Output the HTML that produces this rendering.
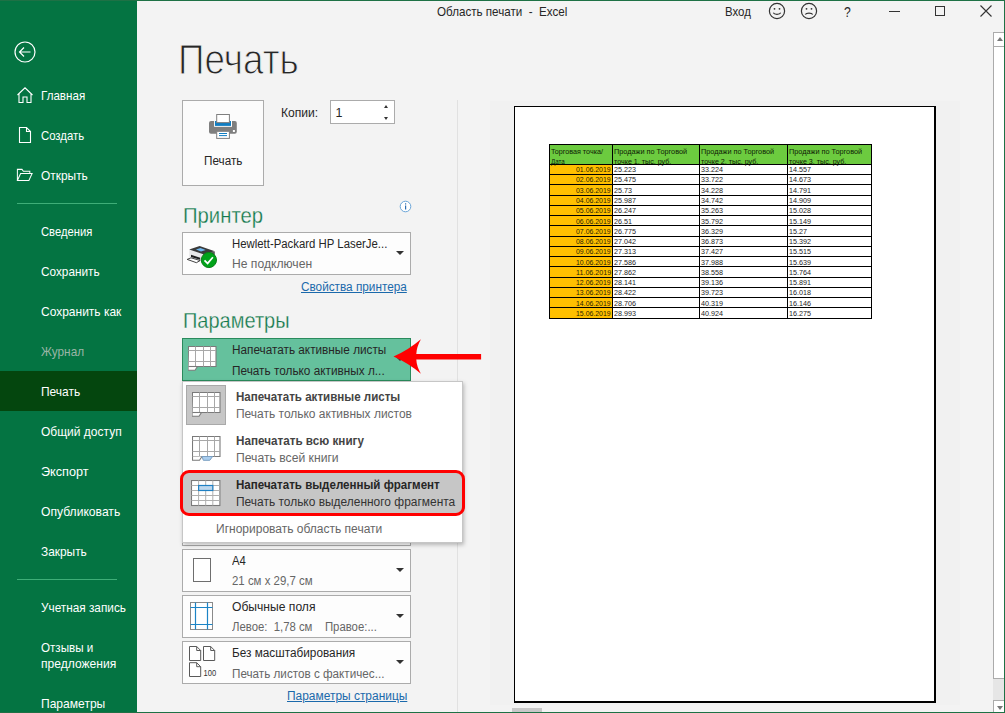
<!DOCTYPE html>
<html lang="ru">
<head>
<meta charset="utf-8">
<title>Область печати - Excel</title>
<style>
*{box-sizing:border-box;margin:0;padding:0}
html,body{width:1005px;height:713px;overflow:hidden;background:#f3f3f3}
body{position:relative;font-family:"Liberation Sans",sans-serif;font-size:13px;color:#262626}
.a{position:absolute}
.t{position:absolute;white-space:nowrap;line-height:1;transform-origin:0 50%;display:block}
#win{position:absolute;left:0;top:0;width:1005px;height:713px;background:#f3f3f3;overflow:hidden}
#side{position:absolute;left:0;top:0;width:137px;height:713px;background:#047442}
#sel{position:absolute;left:0;top:371px;width:137px;height:40px;background:#04460e}
.hr{position:absolute;left:17px;width:100px;height:1px;background:#3fae78}
.box{position:absolute;left:182px;width:229px;background:#fdfdfd;border:1px solid #ababab}
.caret{position:absolute;left:396px;width:0;height:0;border-left:4px solid transparent;border-right:4px solid transparent;border-top:4px solid #333}
</style>
</head>
<body>
<div id="win">

<!-- preview backdrop band -->
<div class="a" style="left:490px;top:101px;width:470px;height:604px;background:#f1f1f1"></div>
<div class="a" style="left:457px;top:100px;width:1px;height:613px;background:#e1e1e1"></div>

<!-- SIDEBAR -->
<div id="side">
  <div id="sel"></div>
  <svg class="a" style="left:13px;top:40px" width="24" height="24" viewBox="0 0 24 24" fill="none" stroke="#fff" stroke-width="1.2"><circle cx="12" cy="12" r="10"/><path d="M17.5 12H7M11 7.5L6.5 12l4.500 4.500"/></svg>
  <svg class="a" style="left:16px;top:86px" width="18" height="18" viewBox="0 0 18 18" fill="none" stroke="#fff" stroke-width="1.1"><path d="M1.500 9L9 1.800 16.500 9M3 7.800V16.500h4V11h4v5.500h4V7.800"/></svg>
  <svg class="a" style="left:18px;top:126px" width="14" height="18" viewBox="0 0 14 18" fill="none" stroke="#fff" stroke-width="1.1"><path d="M1.500 1.500h7l4 4v11h-11zM8.500 1.500v4h4"/></svg>
  <svg class="a" style="left:16.200px;top:168px" width="17.500" height="13.800" viewBox="0 0 19 15" fill="none" stroke="#fff" stroke-width="1.1"><path d="M1.500 13.500V1.500h5l1.500 2h7v2.500M1.500 13.500l3.500-7.500h12.500l-3.500 7.500z"/></svg>
  <div class="hr" style="top:203px"></div>
  <div class="hr" style="top:579px"></div>
</div>

<!-- TITLE BAR ICONS -->
<svg class="a" style="left:768px;top:2px" width="18" height="18" viewBox="0 0 18 18" fill="none" stroke="#333" stroke-width="1.2"><circle cx="9" cy="9" r="7.600"/><path d="M5.300 10.800c1 2 6.400 2 7.400 0"/><circle cx="6.500" cy="6.800" r=".9" fill="#333" stroke="none"/><circle cx="11.500" cy="6.800" r=".9" fill="#333" stroke="none"/></svg>
<svg class="a" style="left:800px;top:2px" width="18" height="18" viewBox="0 0 18 18" fill="none" stroke="#333" stroke-width="1.2"><circle cx="9" cy="9" r="7.600"/><path d="M5.300 12.600c1-2 6.400-2 7.400 0"/><circle cx="6.500" cy="6.800" r=".9" fill="#333" stroke="none"/><circle cx="11.500" cy="6.800" r=".9" fill="#333" stroke="none"/></svg>
<div class="a" style="left:889px;top:11px;width:11px;height:1px;background:#333"></div>
<div class="a" style="left:935px;top:6px;width:10px;height:10px;border:1px solid #333"></div>
<svg class="a" style="left:980px;top:5px" width="12" height="12" viewBox="0 0 12 12" stroke="#333" stroke-width="1.1"><path d="M.5.5l11 11M11.500.5l-11 11"/></svg>

<!-- right scrollbar -->
<div class="a" style="left:993px;top:32px;width:12px;height:681px;background:#e6e6e6"></div>
<div class="a" style="left:993px;top:32px;width:12px;height:15px;background:#fff;border:1px solid #ababab"></div>
<div class="a" style="left:993px;top:46px;width:12px;height:633px;background:#fff;border:1px solid #ababab"></div>
<div class="a" style="left:993px;top:700px;width:12px;height:13px;background:#fff;border:1px solid #ababab"></div>
<div class="a" style="left:997px;top:37px;width:0;height:0;border-left:3.500px solid transparent;border-right:3.500px solid transparent;border-bottom:4px solid #777"></div>
<div class="a" style="left:997px;top:706px;width:0;height:0;border-left:3.500px solid transparent;border-right:3.500px solid transparent;border-top:4px solid #777"></div>
<!-- bottom scroll thumb -->
<div class="a" style="left:512px;top:708px;width:30px;height:5px;background:#c8c8c8"></div>

<!-- PRINT BUTTON -->
<div class="a" style="left:182px;top:100px;width:82px;height:86px;background:#fbfbfb;border:1px solid #ababab"></div>
<svg class="a" style="left:209px;top:114px" width="29" height="26" viewBox="0 0 29 26">
  <rect x="0" y="7" width="27.800" height="12.700" rx="2" fill="#7f7f7f"/>
  <rect x="5.100" y="7" width="17.900" height="5.800" fill="#fff"/>
  <rect x="6" y="7" width="16" height="4.900" fill="#0f7dc2"/>
  <rect x="7.700" y=".5" width="12.700" height="8.100" fill="#fff" stroke="#7f7f7f"/>
  <rect x="7.700" y="17.300" width="12.700" height="7.100" fill="#fff" stroke="#7f7f7f"/>
  <rect x="10" y="19" width="8" height="1" fill="#0f7dc2"/><rect x="10" y="21.100" width="8" height="1" fill="#0f7dc2"/>
  <rect x="23.900" y="16" width="2" height="2" fill="#fff"/>
</svg>
<!-- copies spinner -->
<div class="a" style="left:330px;top:100px;width:65px;height:24px;background:#fff;border:1px solid #ababab"></div>
<div class="a" style="left:384px;top:105px;width:0;height:0;border-left:2.800px solid transparent;border-right:2.800px solid transparent;border-bottom:3px solid #333"></div>
<div class="a" style="left:384px;top:117px;width:0;height:0;border-left:2.800px solid transparent;border-right:2.800px solid transparent;border-top:3px solid #333"></div>

<!-- info icon -->
<svg class="a" style="left:399px;top:200px" width="13" height="13" viewBox="0 0 13 13"><circle cx="6.500" cy="6.500" r="5.300" fill="#fff" stroke="#6aa5d8" stroke-width="1"/><rect x="6" y="5.500" width="1.200" height="4" fill="#2b6cb0"/><rect x="6" y="3.300" width="1.200" height="1.200" fill="#2b6cb0"/></svg>

<!-- PRINTER BOX -->
<div class="box" style="top:232px;height:43px"></div>
<svg class="a" style="left:186px;top:243px" width="34" height="27" viewBox="0 0 34 27">
  <path d="M3.200 6.800L17.300 11v7.300L3.200 13.800z" fill="#e9e9e9"/>
  <path d="M17.300 11l11.500-2.600v5L17.300 18.300z" fill="#5a5a5a"/>
  <path d="M3.200 6.500L13.600 3.100 28.800 8.300 17.300 11.200z" fill="#3a3a3a"/>
  <path d="M9.900 6.600l4.600-1.500 5.200 1.900-4.700 1.500z" fill="#6fb7ee"/>
  <path d="M5 11.800l9.200 2.900v2.100L5 13.900z" fill="#1e1e1e"/>
  <path d="M1.200 16.400l3.800-1.600 9.200 2.700-3.800 2.200z" fill="#fff" stroke="#2e2e2e" stroke-width=".9"/>
  <circle cx="22.900" cy="17" r="7.600" fill="#00a31a" stroke="#0b7d18" stroke-width="1"/>
  <path d="M18.500 17.400l3.100 3 5.300-6.100" fill="none" stroke="#fff" stroke-width="1.700"/>
</svg>
<div class="caret" style="top:251px"></div>

<!-- ACTIVE (green) BOX -->
<div class="a" style="left:182px;top:338px;width:229px;height:43px;background:#65c19d;border:1px solid #2a8a5c"></div>
<svg class="a" style="left:188px;top:346px" width="29" height="26" viewBox="0 0 29 26" fill="none">
  <path d="M.5.5h27.500v20h-18.500l-2.500 3.800h-7z" fill="#fff" stroke="#7a7a7a" stroke-width="1.100"/>
  <path d="M.5 4.500h27.500M.5 15.500h27.500M7.500.5v20M15.500.5v20M22.500.5v20" stroke="#a8a8a8"/>
  <path d="M.5 20.500h9" stroke="#7a7a7a" stroke-width="1.100"/>
</svg>

<!-- hidden box bottom edge (collate) + other boxes -->
<div class="box" style="top:503px;height:43px"></div>
<div class="box" style="top:549px;height:43px"></div>
<div class="box" style="top:595px;height:43px"></div>
<div class="box" style="top:641px;height:43px"></div>
<div class="caret" style="top:568px"></div>
<div class="caret" style="top:614px"></div>
<div class="caret" style="top:660px"></div>
<!-- A4 page icon -->
<div class="a" style="left:193px;top:558px;width:18px;height:24px;background:#fff;border:1px solid #6e6e6e"></div>
<!-- margins icon -->
<svg class="a" style="left:190px;top:602px" width="24" height="28" viewBox="0 0 24 28" fill="none">
  <rect x=".5" y=".5" width="22" height="27" fill="#fff" stroke="#8a8a8a"/>
  <path d="M5.500.5v27M17.500.5v27M.5 5.500h22M.5 22.500h22" stroke="#1c84c6" stroke-width="1.200"/>
</svg>
<!-- scaling icon -->
<svg class="a" style="left:189px;top:646px" width="30" height="32" viewBox="0 0 30 32" fill="none" stroke="#595959">
  <path d="M.5.5h7.200l4 4v10h-11.200zM7.700.5v4h4" fill="#fff"/>
  <path d="M14.500.5h7.200l4 4v10h-11.200zM21.700.5v4h4" fill="#fff"/>
  <path d="M.5 16.700h7.200l4 4v9.800h-11.200zM7.700 16.700v4h4" fill="#fff"/>
  <text x="14.600" y="29.900" font-family="Liberation Sans, sans-serif" font-size="8.300" fill="#333" stroke="none" textLength="12.600" lengthAdjust="spacingAndGlyphs">100</text>
</svg>

<!-- POPUP -->
<div class="a" style="left:182px;top:381px;width:281px;height:162px;background:#fff;border:1px solid #c6c6c6;box-shadow:1px 2px 4px rgba(0,0,0,.25);z-index:20"></div>
<div class="a" style="left:186px;top:385px;width:40px;height:40px;background:#c6c6c6;border:1px solid #a9a9a9;z-index:21"></div>
<svg class="a" style="left:192px;top:392px;z-index:22" width="29" height="26" viewBox="0 0 29 26" fill="none">
  <path d="M.5.5h27.500v20h-18.500l-2.500 3.800h-7z" fill="#fff" stroke="#7a7a7a" stroke-width="1.100"/>
  <path d="M.5 4.500h27.500M.5 15.500h27.500M7.500.5v20M15.500.5v20M22.500.5v20" stroke="#a8a8a8"/>
  <path d="M.5 20.500h9" stroke="#7a7a7a" stroke-width="1.100"/>
</svg>
<svg class="a" style="left:192px;top:436px;z-index:22" width="29" height="26" viewBox="0 0 29 26" fill="none">
  <path d="M.5.5h27.500v20h-27.500z" fill="#fff" stroke="#7a7a7a" stroke-width="1.100"/>
  <path d="M.5 4.500h27.500M.5 15.500h27.500M7.500.5v20M15.500.5v20M22.500.5v20" stroke="#a8a8a8"/>
  <path d="M.5 20.500v3.800h7l2.500-3.800" fill="#fff" stroke="#7a7a7a" stroke-width="1.100"/>
  <path d="M10 20.500l1.300 3.800h6.500l2.800-3.800z" fill="#a9cdee" stroke="#7a9fc2"/>
</svg>
<!-- highlighted item -->
<div class="a" style="left:180px;top:470px;width:285px;height:46px;background:#c6c6c6;border:3px solid #ff0000;border-radius:9px;z-index:23"></div>
<svg class="a" style="left:190.700px;top:479.900px;z-index:24" width="30" height="27" viewBox="0 0 30 27" fill="none">
  <rect x=".5" y=".5" width="28.400" height="25" fill="#fff" stroke="#7a7a7a" stroke-width="1.100"/>
  <path d="M.5 5.500h28.400M.5 10.500h28.400M.5 15.500h28.400M.5 20.500h28.400M7.600.5v25M14.700.5v25M21.800.5v25" stroke="#b0b0b0"/>
  <rect x="7.600" y="5.500" width="14.200" height="5" fill="#bdd7ee" stroke="#1f80c4" stroke-width="1.200"/>
</svg>

<!-- red arrow -->
<div class="caret" style="top:357px"></div>
<svg class="a" style="left:392px;top:337px;z-index:25" width="92" height="40" viewBox="0 0 92 40">
  <path d="M1.500 19.600Q16.500 13 28.900 2.300Q24.600 10 24.300 16.900H89.100V22.600H24.300Q24.600 29.500 28.900 36.800Q16.500 26.200 1.500 19.600z" fill="#ff0000"/>
</svg>

<!-- PREVIEW PAGE -->
<div class="a" style="left:514px;top:106px;width:422px;height:597px;background:#fff;border:1px solid #000;border-right-width:2px;border-bottom-width:2px"></div>
<div class="a" style="left:549.5px;top:144.2px;width:322.0px;height:20.0px;background:#6ccb3f"></div>
<div class="a" style="left:549.5px;top:164.2px;width:63.0px;height:154.0px;background:#ffc000"></div>
<div class="a" style="left:549.0px;top:143.70px;width:323.0px;height:1px;background:#000"></div>
<div class="a" style="left:549.0px;top:163.70px;width:323.0px;height:1px;background:#000"></div>
<div class="a" style="left:549.0px;top:173.97px;width:323.0px;height:1px;background:#000"></div>
<div class="a" style="left:549.0px;top:184.23px;width:323.0px;height:1px;background:#000"></div>
<div class="a" style="left:549.0px;top:194.50px;width:323.0px;height:1px;background:#000"></div>
<div class="a" style="left:549.0px;top:204.77px;width:323.0px;height:1px;background:#000"></div>
<div class="a" style="left:549.0px;top:215.03px;width:323.0px;height:1px;background:#000"></div>
<div class="a" style="left:549.0px;top:225.30px;width:323.0px;height:1px;background:#000"></div>
<div class="a" style="left:549.0px;top:235.57px;width:323.0px;height:1px;background:#000"></div>
<div class="a" style="left:549.0px;top:245.83px;width:323.0px;height:1px;background:#000"></div>
<div class="a" style="left:549.0px;top:256.10px;width:323.0px;height:1px;background:#000"></div>
<div class="a" style="left:549.0px;top:266.37px;width:323.0px;height:1px;background:#000"></div>
<div class="a" style="left:549.0px;top:276.63px;width:323.0px;height:1px;background:#000"></div>
<div class="a" style="left:549.0px;top:286.90px;width:323.0px;height:1px;background:#000"></div>
<div class="a" style="left:549.0px;top:297.17px;width:323.0px;height:1px;background:#000"></div>
<div class="a" style="left:549.0px;top:307.43px;width:323.0px;height:1px;background:#000"></div>
<div class="a" style="left:549.0px;top:317.70px;width:323.0px;height:1px;background:#000"></div>
<div class="a" style="left:549.0px;top:143.7px;width:1px;height:175.0px;background:#000"></div>
<div class="a" style="left:612.0px;top:143.7px;width:1px;height:175.0px;background:#000"></div>
<div class="a" style="left:698.9px;top:143.7px;width:1px;height:175.0px;background:#000"></div>
<div class="a" style="left:786.9px;top:143.7px;width:1px;height:175.0px;background:#000"></div>
<div class="a" style="left:871.0px;top:143.7px;width:1px;height:175.0px;background:#000"></div>

<span class="t" id="t0" style="left:41.0px;top:89.00px;font-size:13.2px;color:#ffffff;transform:scaleX(0.8800);">Главная</span>
<span class="t" id="t1" style="left:41.0px;top:129.00px;font-size:13.2px;color:#ffffff;transform:scaleX(0.8600);">Создать</span>
<span class="t" id="t2" style="left:41.0px;top:169.00px;font-size:13.2px;color:#ffffff;transform:scaleX(0.9038);">Открыть</span>
<span class="t" id="t3" style="left:41.0px;top:225.00px;font-size:13.2px;color:#ffffff;transform:scaleX(0.8500);">Сведения</span>
<span class="t" id="t4" style="left:41.0px;top:265.00px;font-size:13.2px;color:#ffffff;transform:scaleX(0.8939);">Сохранить</span>
<span class="t" id="t5" style="left:41.0px;top:305.00px;font-size:13.2px;color:#ffffff;transform:scaleX(0.9091);">Сохранить как</span>
<span class="t" id="t6" style="left:41.0px;top:345.00px;font-size:13.2px;color:#9ab5a6;transform:scaleX(0.8958);">Журнал</span>
<span class="t" id="t7" style="left:41.0px;top:385.00px;font-size:13.2px;color:#ffffff;transform:scaleX(0.9070);">Печать</span>
<span class="t" id="t8" style="left:41.0px;top:425.00px;font-size:13.2px;color:#ffffff;transform:scaleX(0.9101);">Общий доступ</span>
<span class="t" id="t9" style="left:41.0px;top:465.00px;font-size:13.2px;color:#ffffff;transform:scaleX(0.9600);">Экспорт</span>
<span class="t" id="t10" style="left:41.0px;top:505.00px;font-size:13.2px;color:#ffffff;transform:scaleX(0.9186);">Опубликовать</span>
<span class="t" id="t11" style="left:41.0px;top:545.00px;font-size:13.2px;color:#ffffff;transform:scaleX(0.9020);">Закрыть</span>
<span class="t" id="t12" style="left:41.0px;top:601.00px;font-size:13.2px;color:#ffffff;transform:scaleX(0.8947);">Учетная запись</span>
<span class="t" id="t13" style="left:41.0px;top:641.00px;font-size:13.2px;color:#ffffff;transform:scaleX(0.8814);">Отзывы и</span>
<span class="t" id="t14" style="left:41.0px;top:657.00px;font-size:13.2px;color:#ffffff;transform:scaleX(0.9146);">предложения</span>
<span class="t" id="t15" style="left:41.0px;top:697.00px;font-size:13.2px;color:#ffffff;transform:scaleX(0.9143);">Параметры</span>
<span class="t" id="t16" style="left:437.3px;top:6.00px;font-size:12.8px;color:#262626;transform:scaleX(0.9076);">Область печати&nbsp; -&nbsp; Excel</span>
<span class="t" id="t17" style="left:725.3px;top:6.00px;font-size:12.8px;color:#262626;transform:scaleX(0.8931);">Вход</span>
<span class="t" id="t18" style="left:844.3px;top:4.00px;font-size:15px;color:#262626;transform:scaleX(0.8125);">?</span>
<span class="t" id="t19" style="left:177.6px;top:38.00px;font-size:43.4px;color:#262626;transform:scaleX(0.8500);-webkit-text-stroke:1.1px #f3f3f3">Печать</span>
<span class="t" id="t20" style="left:203.6px;top:155.00px;font-size:12.5px;color:#262626;transform:scaleX(0.9366);">Печать</span>
<span class="t" id="t21" style="left:281.4px;top:107.00px;font-size:12.5px;color:#262626;transform:scaleX(0.9684);">Копии:</span>
<span class="t" id="t22" style="left:335.5px;top:107.00px;font-size:12.5px;color:#262626;transform:scaleX(1.0000);">1</span>
<span class="t" id="t23" style="left:183.0px;top:204.00px;font-size:22.7px;color:#14794b;transform:scaleX(0.8944);-webkit-text-stroke:.3px #f3f3f3">Принтер</span>
<span class="t" id="t24" style="left:232.1px;top:238.00px;font-size:12.5px;color:#262626;transform:scaleX(0.9099);">Hewlett-Packard HP LaserJe...</span>
<span class="t" id="t25" style="left:232.1px;top:258.00px;font-size:12.5px;color:#666666;transform:scaleX(0.9699);">Не подключен</span>
<span class="t" id="t26" style="left:301.4px;top:281.00px;font-size:12.5px;color:#1a69ab;transform:scaleX(0.9411);text-decoration:underline">Свойства принтера</span>
<span class="t" id="t27" style="left:183.0px;top:309.00px;font-size:22.7px;color:#14794b;transform:scaleX(0.8810);-webkit-text-stroke:.3px #f3f3f3">Параметры</span>
<span class="t" id="t28" style="left:232.1px;top:344.00px;font-size:12.5px;color:#262626;transform:scaleX(0.9415);">Напечатать активные листы</span>
<span class="t" id="t29" style="left:232.1px;top:365.00px;font-size:12.5px;color:#262626;transform:scaleX(0.9438);">Печать только активных л...</span>
<span class="t" id="t30" style="left:235.8px;top:391.00px;font-size:12.5px;color:#444444;transform:scaleX(0.9254);z-index:30;font-weight:bold">Напечатать активные листы</span>
<span class="t" id="t31" style="left:235.8px;top:408.00px;font-size:12.5px;color:#666666;transform:scaleX(0.9576);z-index:30;">Печать только активных листов</span>
<span class="t" id="t32" style="left:235.8px;top:435.00px;font-size:12.5px;color:#444444;transform:scaleX(0.9350);z-index:30;font-weight:bold">Напечатать всю книгу</span>
<span class="t" id="t33" style="left:235.8px;top:452.00px;font-size:12.5px;color:#666666;transform:scaleX(0.9733);z-index:30;">Печать всей книги</span>
<span class="t" id="t34" style="left:235.8px;top:479.00px;font-size:12.5px;color:#262626;transform:scaleX(0.9250);z-index:30;font-weight:bold">Напечатать выделенный фрагмент</span>
<span class="t" id="t35" style="left:235.8px;top:496.00px;font-size:12.5px;color:#333333;transform:scaleX(0.9555);z-index:30;">Печать только выделенного фрагмента</span>
<span class="t" id="t36" style="left:216.4px;top:523.00px;font-size:12.5px;color:#666666;transform:scaleX(0.9607);z-index:30;">Игнорировать область печати</span>
<span class="t" id="t37" style="left:232.1px;top:555.00px;font-size:12.5px;color:#262626;transform:scaleX(0.9067);">A4</span>
<span class="t" id="t38" style="left:232.1px;top:575.00px;font-size:12.5px;color:#666666;transform:scaleX(0.9148);">21 см x 29,7 см</span>
<span class="t" id="t39" style="left:232.1px;top:601.00px;font-size:12.5px;color:#262626;transform:scaleX(0.9686);">Обычные поля</span>
<span class="t" id="t40" style="left:232.1px;top:621.00px;font-size:12.5px;color:#666666;transform:scaleX(0.9069);">Левое:&nbsp; 1,78 см&nbsp;&nbsp;&nbsp; Правое:...</span>
<span class="t" id="t41" style="left:232.1px;top:647.00px;font-size:12.5px;color:#262626;transform:scaleX(0.9427);">Без масштабирования</span>
<span class="t" id="t42" style="left:232.1px;top:668.00px;font-size:12.5px;color:#666666;transform:scaleX(0.9350);">Печать листов с фактичес...</span>
<span class="t" id="t43" style="left:286.5px;top:690.00px;font-size:12.5px;color:#1a69ab;transform:scaleX(0.9548);text-decoration:underline">Параметры страницы</span>
<span class="t" id="t44" style="left:551.3px;top:148.00px;font-size:7.0px;color:#0c1a05;transform:scaleX(1.0255);">Торговая точка/</span>
<span class="t" id="t45" style="left:551.3px;top:158.00px;font-size:7.0px;color:#0c1a05;transform:scaleX(0.8938);">Дата</span>
<span class="t" id="t46" style="left:614.2px;top:148.00px;font-size:7.0px;color:#0c1a05;transform:scaleX(1.0429);">Продажи по Торговой</span>
<span class="t" id="t47" style="left:614.2px;top:158.00px;font-size:7.0px;color:#0c1a05;transform:scaleX(1.0179);">точке 1, тыс. руб.</span>
<span class="t" id="t48" style="left:701.3px;top:148.00px;font-size:7.0px;color:#0c1a05;transform:scaleX(1.0429);">Продажи по Торговой</span>
<span class="t" id="t49" style="left:701.3px;top:158.00px;font-size:7.0px;color:#0c1a05;transform:scaleX(1.0179);">точке 2, тыс. руб.</span>
<span class="t" id="t50" style="left:789.0px;top:148.00px;font-size:7.0px;color:#0c1a05;transform:scaleX(1.0429);">Продажи по Торговой</span>
<span class="t" id="t51" style="left:789.0px;top:158.00px;font-size:7.0px;color:#0c1a05;transform:scaleX(1.0179);">точке 3, тыс. руб.</span>
<span class="t" id="t52" style="left:576.3px;top:166.00px;font-size:7.2px;color:#2a2200;transform:scaleX(0.9639);">01.06.2019</span>
<span class="t" id="t53" style="left:613.8px;top:166.00px;font-size:7.2px;color:#1c1c1c;transform:scaleX(1.0008);">25.223</span>
<span class="t" id="t54" style="left:701.4px;top:166.00px;font-size:7.2px;color:#1c1c1c;transform:scaleX(1.0008);">33.224</span>
<span class="t" id="t55" style="left:788.9px;top:166.00px;font-size:7.2px;color:#1c1c1c;transform:scaleX(1.0008);">14.557</span>
<span class="t" id="t56" style="left:576.3px;top:176.00px;font-size:7.2px;color:#2a2200;transform:scaleX(0.9639);">02.06.2019</span>
<span class="t" id="t57" style="left:613.8px;top:176.00px;font-size:7.2px;color:#1c1c1c;transform:scaleX(1.0008);">25.475</span>
<span class="t" id="t58" style="left:701.4px;top:176.00px;font-size:7.2px;color:#1c1c1c;transform:scaleX(1.0008);">33.722</span>
<span class="t" id="t59" style="left:788.9px;top:176.00px;font-size:7.2px;color:#1c1c1c;transform:scaleX(1.0008);">14.673</span>
<span class="t" id="t60" style="left:576.3px;top:187.00px;font-size:7.2px;color:#2a2200;transform:scaleX(0.9639);">03.06.2019</span>
<span class="t" id="t61" style="left:613.8px;top:187.00px;font-size:7.2px;color:#1c1c1c;transform:scaleX(1.0008);">25.73</span>
<span class="t" id="t62" style="left:701.4px;top:187.00px;font-size:7.2px;color:#1c1c1c;transform:scaleX(1.0008);">34.228</span>
<span class="t" id="t63" style="left:788.9px;top:187.00px;font-size:7.2px;color:#1c1c1c;transform:scaleX(1.0008);">14.791</span>
<span class="t" id="t64" style="left:576.3px;top:197.00px;font-size:7.2px;color:#2a2200;transform:scaleX(0.9639);">04.06.2019</span>
<span class="t" id="t65" style="left:613.8px;top:197.00px;font-size:7.2px;color:#1c1c1c;transform:scaleX(1.0008);">25.987</span>
<span class="t" id="t66" style="left:701.4px;top:197.00px;font-size:7.2px;color:#1c1c1c;transform:scaleX(1.0008);">34.742</span>
<span class="t" id="t67" style="left:788.9px;top:197.00px;font-size:7.2px;color:#1c1c1c;transform:scaleX(1.0008);">14.909</span>
<span class="t" id="t68" style="left:576.3px;top:207.00px;font-size:7.2px;color:#2a2200;transform:scaleX(0.9639);">05.06.2019</span>
<span class="t" id="t69" style="left:613.8px;top:207.00px;font-size:7.2px;color:#1c1c1c;transform:scaleX(1.0008);">26.247</span>
<span class="t" id="t70" style="left:701.4px;top:207.00px;font-size:7.2px;color:#1c1c1c;transform:scaleX(1.0008);">35.263</span>
<span class="t" id="t71" style="left:788.9px;top:207.00px;font-size:7.2px;color:#1c1c1c;transform:scaleX(1.0008);">15.028</span>
<span class="t" id="t72" style="left:576.3px;top:218.00px;font-size:7.2px;color:#2a2200;transform:scaleX(0.9639);">06.06.2019</span>
<span class="t" id="t73" style="left:613.8px;top:218.00px;font-size:7.2px;color:#1c1c1c;transform:scaleX(1.0008);">26.51</span>
<span class="t" id="t74" style="left:701.4px;top:218.00px;font-size:7.2px;color:#1c1c1c;transform:scaleX(1.0008);">35.792</span>
<span class="t" id="t75" style="left:788.9px;top:218.00px;font-size:7.2px;color:#1c1c1c;transform:scaleX(1.0008);">15.149</span>
<span class="t" id="t76" style="left:576.3px;top:228.00px;font-size:7.2px;color:#2a2200;transform:scaleX(0.9639);">07.06.2019</span>
<span class="t" id="t77" style="left:613.8px;top:228.00px;font-size:7.2px;color:#1c1c1c;transform:scaleX(1.0008);">26.775</span>
<span class="t" id="t78" style="left:701.4px;top:228.00px;font-size:7.2px;color:#1c1c1c;transform:scaleX(1.0008);">36.329</span>
<span class="t" id="t79" style="left:788.9px;top:228.00px;font-size:7.2px;color:#1c1c1c;transform:scaleX(1.0008);">15.27</span>
<span class="t" id="t80" style="left:576.3px;top:238.00px;font-size:7.2px;color:#2a2200;transform:scaleX(0.9639);">08.06.2019</span>
<span class="t" id="t81" style="left:613.8px;top:238.00px;font-size:7.2px;color:#1c1c1c;transform:scaleX(1.0008);">27.042</span>
<span class="t" id="t82" style="left:701.4px;top:238.00px;font-size:7.2px;color:#1c1c1c;transform:scaleX(1.0008);">36.873</span>
<span class="t" id="t83" style="left:788.9px;top:238.00px;font-size:7.2px;color:#1c1c1c;transform:scaleX(1.0008);">15.392</span>
<span class="t" id="t84" style="left:576.3px;top:248.00px;font-size:7.2px;color:#2a2200;transform:scaleX(0.9639);">09.06.2019</span>
<span class="t" id="t85" style="left:613.8px;top:248.00px;font-size:7.2px;color:#1c1c1c;transform:scaleX(1.0008);">27.313</span>
<span class="t" id="t86" style="left:701.4px;top:248.00px;font-size:7.2px;color:#1c1c1c;transform:scaleX(1.0008);">37.427</span>
<span class="t" id="t87" style="left:788.9px;top:248.00px;font-size:7.2px;color:#1c1c1c;transform:scaleX(1.0008);">15.515</span>
<span class="t" id="t88" style="left:576.3px;top:259.00px;font-size:7.2px;color:#2a2200;transform:scaleX(0.9639);">10.06.2019</span>
<span class="t" id="t89" style="left:613.8px;top:259.00px;font-size:7.2px;color:#1c1c1c;transform:scaleX(1.0008);">27.586</span>
<span class="t" id="t90" style="left:701.4px;top:259.00px;font-size:7.2px;color:#1c1c1c;transform:scaleX(1.0008);">37.988</span>
<span class="t" id="t91" style="left:788.9px;top:259.00px;font-size:7.2px;color:#1c1c1c;transform:scaleX(1.0008);">15.639</span>
<span class="t" id="t92" style="left:576.3px;top:269.00px;font-size:7.2px;color:#2a2200;transform:scaleX(0.9914);">11.06.2019</span>
<span class="t" id="t93" style="left:613.8px;top:269.00px;font-size:7.2px;color:#1c1c1c;transform:scaleX(1.0008);">27.862</span>
<span class="t" id="t94" style="left:701.4px;top:269.00px;font-size:7.2px;color:#1c1c1c;transform:scaleX(1.0008);">38.558</span>
<span class="t" id="t95" style="left:788.9px;top:269.00px;font-size:7.2px;color:#1c1c1c;transform:scaleX(1.0008);">15.764</span>
<span class="t" id="t96" style="left:576.3px;top:279.00px;font-size:7.2px;color:#2a2200;transform:scaleX(0.9639);">12.06.2019</span>
<span class="t" id="t97" style="left:613.8px;top:279.00px;font-size:7.2px;color:#1c1c1c;transform:scaleX(1.0008);">28.141</span>
<span class="t" id="t98" style="left:701.4px;top:279.00px;font-size:7.2px;color:#1c1c1c;transform:scaleX(1.0008);">39.136</span>
<span class="t" id="t99" style="left:788.9px;top:279.00px;font-size:7.2px;color:#1c1c1c;transform:scaleX(1.0008);">15.891</span>
<span class="t" id="t100" style="left:576.3px;top:289.00px;font-size:7.2px;color:#2a2200;transform:scaleX(0.9639);">13.06.2019</span>
<span class="t" id="t101" style="left:613.8px;top:289.00px;font-size:7.2px;color:#1c1c1c;transform:scaleX(1.0008);">28.422</span>
<span class="t" id="t102" style="left:701.4px;top:289.00px;font-size:7.2px;color:#1c1c1c;transform:scaleX(1.0008);">39.723</span>
<span class="t" id="t103" style="left:788.9px;top:289.00px;font-size:7.2px;color:#1c1c1c;transform:scaleX(1.0008);">16.018</span>
<span class="t" id="t104" style="left:576.3px;top:300.00px;font-size:7.2px;color:#2a2200;transform:scaleX(0.9639);">14.06.2019</span>
<span class="t" id="t105" style="left:613.8px;top:300.00px;font-size:7.2px;color:#1c1c1c;transform:scaleX(1.0008);">28.706</span>
<span class="t" id="t106" style="left:701.4px;top:300.00px;font-size:7.2px;color:#1c1c1c;transform:scaleX(1.0008);">40.319</span>
<span class="t" id="t107" style="left:788.9px;top:300.00px;font-size:7.2px;color:#1c1c1c;transform:scaleX(1.0008);">16.146</span>
<span class="t" id="t108" style="left:576.3px;top:310.00px;font-size:7.2px;color:#2a2200;transform:scaleX(0.9639);">15.06.2019</span>
<span class="t" id="t109" style="left:613.8px;top:310.00px;font-size:7.2px;color:#1c1c1c;transform:scaleX(1.0008);">28.993</span>
<span class="t" id="t110" style="left:701.4px;top:310.00px;font-size:7.2px;color:#1c1c1c;transform:scaleX(1.0008);">40.924</span>
<span class="t" id="t111" style="left:788.9px;top:310.00px;font-size:7.2px;color:#1c1c1c;transform:scaleX(1.0008);">16.275</span>

</div>
<div class="a" style="left:0;top:0;width:1005px;height:1px;background:#1e7145;z-index:60"></div>
<div class="a" style="left:0;top:712px;width:1005px;height:1px;background:#1e7145;z-index:60"></div>
<div class="a" style="left:1004px;top:0;width:1px;height:713px;background:#1e7145;z-index:60"></div>
</body>
</html>
